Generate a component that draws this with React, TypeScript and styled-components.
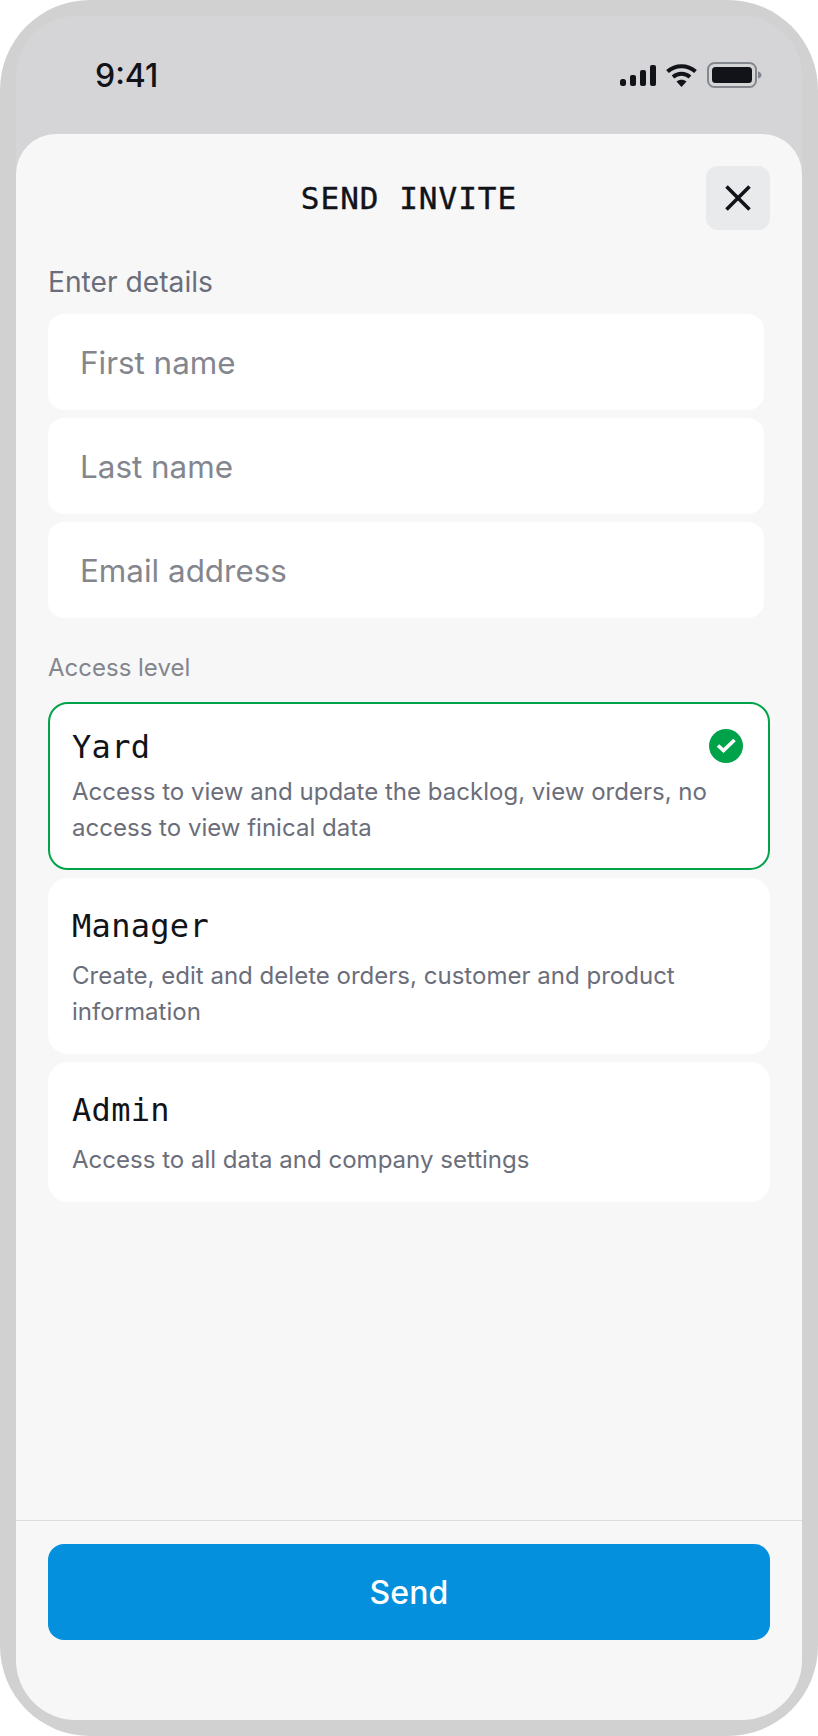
import React from "react";
import styled, { createGlobalStyle } from "styled-components";

const Global = createGlobalStyle`
  html, body { margin: 0; padding: 0; background: #fff; }
  * { box-sizing: border-box; }
  body { font-family: Inter, "Liberation Sans", sans-serif; }
`;

const Frame = styled.div`
  width: 818px;
  height: 1736px;
  padding: 16px;
  border-radius: 90px;
  background: #d1d1d1;
  display: flex;
`;

const Screen = styled.div`
  flex: 1;
  border-radius: 60px;
  background: #d5d5d7;
  display: flex;
  flex-direction: column;
  overflow: hidden;
`;

const StatusBar = styled.div`
  height: 118px;
  flex: none;
  display: flex;
  align-items: flex-start;
  justify-content: space-between;
  padding: 40px 40px 0 79px;
`;

const Clock = styled.span`
  font-size: 32px;
  line-height: 40px;
  font-weight: 500;
  color: #111318;
`;

const StatusIcons = styled.div`
  display: flex;
  align-items: center;
  gap: 10px;
  padding-top: 6px;
`;

const Sheet = styled.div`
  flex: 1;
  background: #f7f7f8;
  border-radius: 40px 40px 0 0;
  display: flex;
  flex-direction: column;
  min-height: 0;
`;

const Body = styled.div`
  flex: 1;
  padding: 32px 32px 0;
  display: flex;
  flex-direction: column;
`;

const Header = styled.header`
  height: 64px;
  display: flex;
  align-items: center;
  justify-content: flex-end;
  position: relative;
`;

const Title = styled.h1`
  position: absolute;
  inset: 0;
  margin: 0;
  display: flex;
  align-items: center;
  justify-content: center;
  font-family: "DejaVu Sans Mono", "Liberation Mono", monospace;
  font-size: 31px;
  font-weight: 400;
  letter-spacing: 1px;
  color: #111318;
  -webkit-text-stroke: 0.4px #111318;
`;

const CloseButton = styled.button`
  position: relative;
  width: 64px;
  height: 64px;
  padding: 0;
  border: 0;
  border-radius: 12px;
  background: #e9eaec;
  display: flex;
  align-items: center;
  justify-content: center;
`;

const DetailsLabel = styled.div`
  margin-top: 34px;
  margin-bottom: 14px;
  font-size: 28.2px;
  line-height: 36px;
  color: #6b6e7a;
`;

const AccessLabel = styled.div`
  margin-top: 32px;
  margin-bottom: 16px;
  font-size: 24px;
  line-height: 36px;
  color: #84868e;
`;

const Fields = styled.div`
  display: flex;
  flex-direction: column;
  gap: 8px;
  margin-right: 6px;
`;

const Field = styled.div`
  height: 96px;
  background: #fff;
  border-radius: 16px;
  display: flex;
  align-items: center;
  padding: 2px 32px 0;
  font-size: 31.4px;
  color: #84868e;
`;

const Options = styled.div`
  display: flex;
  flex-direction: column;
  gap: 8px;
`;

const Option = styled.div<{ $selected?: boolean }>`
  position: relative;
  background: #fff;
  border-radius: 20px;
  border: 2px solid ${(p) => (p.$selected ? "#00a34a" : "transparent")};
  padding: ${(p) => (p.$selected ? "21px" : "24px")} 22px 22px;
`;

const OptionName = styled.div`
  font-family: "DejaVu Sans Mono", "Liberation Mono", monospace;
  font-size: 32px;
  line-height: 44px;
  letter-spacing: 0.3px;
  color: #111318;
`;

const OptionText = styled.div<{ $selected?: boolean }>`
  margin-top: ${(p) => (p.$selected ? "5px" : "10px")};
  font-size: 24.04px;
  line-height: 36px;
  color: #6b6e7a;
`;

const CheckBadge = styled.svg`
  position: absolute;
  top: 25px;
  right: 25px;
`;

const Footer = styled.footer`
  flex: none;
  border-top: 1px solid #dcdcdc;
  padding: 23px 32px 80px;
`;

const SendButton = styled.button`
  width: 100%;
  height: 96px;
  border: 0;
  border-radius: 16px;
  background: #0590de;
  color: #fff;
  font-family: Inter, "Liberation Sans", sans-serif;
  font-size: 32px;
  font-weight: 500;
  letter-spacing: 0.1px;
`;

const options = [
  { name: "Yard", text: "Access to view and update the backlog, view orders, no access to view finical data", selected: true },
  { name: "Manager", text: "Create, edit and delete orders, customer and product information" },
  { name: "Admin", text: "Access to all data and company settings" },
];

export default function App() {
  return (
    <>
      <Global />
      <Frame>
        <Screen>
          <StatusBar>
            <Clock>9:41</Clock>
            <StatusIcons>
              <svg width="36" height="21" viewBox="0 0 36 21" fill="#111318">
                <rect x="0" y="14" width="6" height="7" rx="2.5" />
                <rect x="10" y="10" width="6" height="11" rx="2" />
                <rect x="20" y="5" width="6" height="16" rx="2" />
                <rect x="30" y="0" width="6" height="21" rx="2" />
              </svg>
              <svg width="31" height="23" viewBox="0 0 31 23" fill="none">
                <path d="M1.5 7.5 C9.5 0.5 21.5 0.5 29.5 7.5" stroke="#111318" strokeWidth="4" />
                <path d="M7 13 C12 8.8 19 8.8 24 13" stroke="#111318" strokeWidth="4" />
                <path d="M10.5 17.5 L15.5 23 L20.5 17.5 C17.5 15 13.5 15 10.5 17.5 Z" fill="#111318" />
              </svg>
              <svg width="55" height="26" viewBox="0 0 55 26" fill="none">
                <rect x="1" y="1" width="48" height="24" rx="6.5" stroke="#85878f" strokeWidth="2" />
                <rect x="5" y="5" width="40" height="16" rx="3.5" fill="#111318" />
                <path d="M51 9.5 C53.5 10 54.5 11.5 54.5 13 C54.5 14.5 53.5 16 51 16.5 Z" fill="#85878f" />
              </svg>
            </StatusIcons>
          </StatusBar>
          <Sheet>
            <Body>
              <Header>
                <Title>SEND INVITE</Title>
                <CloseButton aria-label="Close">
                  <svg width="26" height="26" viewBox="0 0 26 26" fill="none">
                    <path d="M1.5 1.5 L24.5 24.5 M24.5 1.5 L1.5 24.5" stroke="#111318" strokeWidth="3.6" />
                  </svg>
                </CloseButton>
              </Header>
              <DetailsLabel>Enter details</DetailsLabel>
              <Fields>
                <Field>First name</Field>
                <Field>Last name</Field>
                <Field>Email address</Field>
              </Fields>
              <AccessLabel>Access level</AccessLabel>
              <Options>
                {options.map((o) => (
                  <Option key={o.name} $selected={o.selected}>
                    <OptionName>{o.name}</OptionName>
                    <OptionText $selected={o.selected}>{o.text}</OptionText>
                    {o.selected && (
                      <CheckBadge width="34" height="34" viewBox="0 0 34 34">
                        <circle cx="17" cy="17" r="17" fill="#00a34a" />
                        <path d="M9 16.5 L14.5 21.5 L25.5 11" fill="none" stroke="#fff" strokeWidth="3.6" />
                      </CheckBadge>
                    )}
                  </Option>
                ))}
              </Options>
            </Body>
            <Footer>
              <SendButton>Send</SendButton>
            </Footer>
          </Sheet>
        </Screen>
      </Frame>
    </>
  );
}
